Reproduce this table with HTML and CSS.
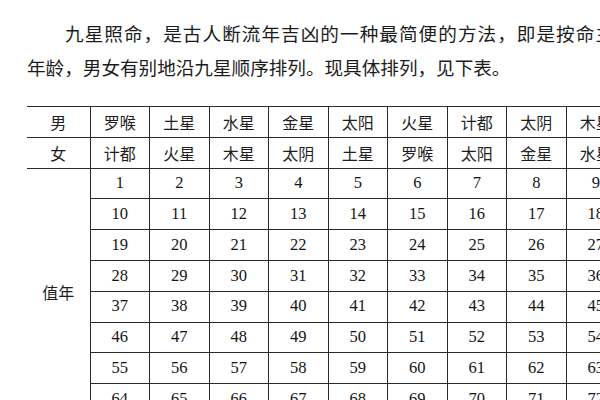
FILE: index.html
```html
<!DOCTYPE html>
<html lang="zh-CN">
<head>
<meta charset="utf-8">
<title>九星照命</title>
<link rel="stylesheet" href="styles.css">
</head>
<body>
<div class="page">
  <div class="intro">
    <p class="line first">九星照命，是古人断流年吉凶的一种最简便的方法，即是按命主</p>
    <p class="line">年龄，男女有别地沿九星顺序排列。现具体排列，见下表。</p>
  </div>
  <table class="stars">
    <colgroup>
      <col class="c-label">
      <col class="c-data"><col class="c-data"><col class="c-data">
      <col class="c-data"><col class="c-data"><col class="c-data">
      <col class="c-data"><col class="c-data"><col class="c-data">
    </colgroup>
    <tbody>
      <tr class="head male">
        <td class="label">男</td>
        <td>罗喉</td><td>土星</td><td>水星</td><td>金星</td><td>太阳</td><td>火星</td><td>计都</td><td>太阴</td><td>木星</td>
      </tr>
      <tr class="head">
        <td class="label">女</td>
        <td>计都</td><td>火星</td><td>木星</td><td>太阴</td><td>土星</td><td>罗喉</td><td>太阳</td><td>金星</td><td>水星</td>
      </tr>
      <tr class="num">
        <td class="label year" rowspan="8">值年</td>
        <td>1</td><td>2</td><td>3</td><td>4</td><td>5</td><td>6</td><td>7</td><td>8</td><td>9</td>
      </tr>
      <tr class="num"><td>10</td><td>11</td><td>12</td><td>13</td><td>14</td><td>15</td><td>16</td><td>17</td><td>18</td></tr>
      <tr class="num"><td>19</td><td>20</td><td>21</td><td>22</td><td>23</td><td>24</td><td>25</td><td>26</td><td>27</td></tr>
      <tr class="num"><td>28</td><td>29</td><td>30</td><td>31</td><td>32</td><td>33</td><td>34</td><td>35</td><td>36</td></tr>
      <tr class="num"><td>37</td><td>38</td><td>39</td><td>40</td><td>41</td><td>42</td><td>43</td><td>44</td><td>45</td></tr>
      <tr class="num"><td>46</td><td>47</td><td>48</td><td>49</td><td>50</td><td>51</td><td>52</td><td>53</td><td>54</td></tr>
      <tr class="num"><td>55</td><td>56</td><td>57</td><td>58</td><td>59</td><td>60</td><td>61</td><td>62</td><td>63</td></tr>
      <tr class="num"><td>64</td><td>65</td><td>66</td><td>67</td><td>68</td><td>69</td><td>70</td><td>71</td><td>72</td></tr>
    </tbody>
  </table>
</div>
</body>
</html>
```

FILE: styles.css
```css
html, body {
  margin: 0;
  padding: 0;
  background: #ffffff;
}

body {
  width: 600px;
  height: 400px;
  overflow: hidden;
  color: #1c1c1c;
  font-family: "Noto Sans CJK SC", "Noto Sans", sans-serif;
}

.page {
  width: 700px;
}

.intro {
  padding: 16px 0 0 27px;
  white-space: nowrap;
}

.line {
  margin: 0;
  font-size: 18.6px;
  line-height: 34px;
}

.line.first {
  text-indent: 38px;
  letter-spacing: 1.05px;
}

.stars {
  margin: 22px 0 0 27px;
  border-collapse: collapse;
  table-layout: fixed;
  width: 598.5px;
}

.c-label {
  width: 63px;
}

.c-data {
  width: 59.5px;
}

.stars td {
  height: 29.8px;
  padding: 0;
  text-align: center;
  vertical-align: middle;
  border-right: 1px solid #2a2a2a;
  border-bottom: 1px solid #2a2a2a;
  line-height: 1;
}

.stars tr.male td {
  border-top: 1.5px solid #2a2a2a;
}

.head td {
  font-family: "Noto Sans CJK SC", sans-serif;
  font-size: 16px;
  color: #1e1e1e;
}

.num td {
  font-family: "Liberation Serif", "Times New Roman", serif;
  font-size: 16.5px;
  color: #141414;
}

.stars td.year {
  font-family: "Noto Sans CJK SC", sans-serif;
  font-size: 16px;
  color: #1e1e1e;
  border-bottom: none;
}
```
